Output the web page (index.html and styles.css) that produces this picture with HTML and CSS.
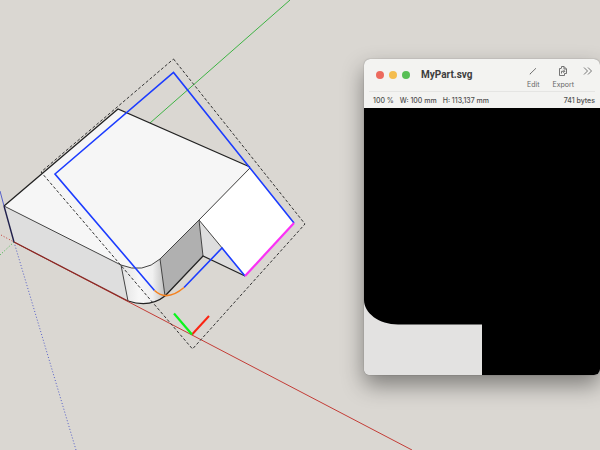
FILE: index.html
```html
<!DOCTYPE html>
<html lang="en">
<head>
<meta charset="utf-8">
<meta name="viewport" content="width=device-width, initial-scale=1">
<title>MyPart.svg</title>
<link rel="stylesheet" href="styles.css">
</head>
<body>
<main class="desktop">
  <svg class="scene" viewBox="0 0 600 450" role="img" aria-label="3D model with selected face">
    <defs>
      <linearGradient id="round" x1="121" y1="0" x2="166" y2="0" gradientUnits="userSpaceOnUse">
        <stop offset="0" stop-color="#e2e2e2"/>
        <stop offset=".4" stop-color="#f7f7f7"/>
        <stop offset=".7" stop-color="#f0f0f0"/>
        <stop offset="1" stop-color="#bcbcbc"/>
      </linearGradient>
    </defs>
    <g class="axes">
      <path class="axis-green" d="M150 123L290 0"/>
      <path class="axis-green dotted" d="M0 255L14 242"/>
      <path class="axis-red dotted" d="M1 235L14 242"/>
      <path class="axis-blue dotted" d="M14 242L76 450"/>
      <path class="axis-blue" d="M0 191L4 206"/>
    </g>
    <g class="solid">
      <path fill="#dedede" d="M4 206L121 265L128 301L14 242Z"/>
      <path fill="url(#round)" d="M121 265Q143 274 160 259L165 296Q150 308 128 301Z"/>
      <path fill="#b0b0b0" d="M199 220L203 256L165 296L160 259Z"/>
      <path fill="#dedede" d="M199 220L203 256L245 276Z"/>
      <path fill="#f6f6f6" d="M4 206L118 109L250 167L199 220L160 259Q143 274 121 265Z"/>
      <path fill="#fff" d="M250 168L294 223L245 276L199 220Z"/>
    </g>
    <g class="edges">
      <path d="M4 206L121 265Q143 274 160 259L199 220L250 168M121 265L128 301M160 259L165 296M199 220L203 256M199 220L223 249"/>
      <path class="bold" d="M4 206L118 109L250 167M165 296L203 256L245 276M128 301Q150 308 165 296"/>
      <path class="navy" d="M4 206L14 242"/>
    </g>
    <path class="axis-red" d="M14 242L412 450"/>
    <path class="base" d="M14 242L128 301"/>
    <path class="bounds" d="M173.500 59L305 224L192.500 349L41 172Z"/>
    <path class="outline" d="M154.500 290.500L55 174L173.500 72.500L294 223M184 287.500L222 248L245 276"/>
    <path class="arc" d="M154.500 290.500Q167 302 184 287.500"/>
    <path class="bottom" d="M245 276L294 223"/>
    <path class="mark-red" d="M192 334.500L209 316"/>
    <path class="mark-green" d="M192 334.500L174 313.500"/>
  </svg>

  <section class="window" aria-label="MyPart.svg">
    <header class="titlebar">
      <div class="lights">
        <button class="light close" aria-label="Close"></button>
        <button class="light minimize" aria-label="Minimize"></button>
        <button class="light expand" aria-label="Zoom"></button>
      </div>
      <h1 class="title">MyPart.svg</h1>
      <div class="tools">
        <button class="tool">
          <svg class="icon" viewBox="0 0 12 12" aria-hidden="true"><path d="M3 9L9 3.200"/><path d="M2.800 9.300L4 8.200"/></svg>
          <span>Edit</span>
        </button>
        <button class="tool">
          <svg class="icon" viewBox="0 0 12 12" aria-hidden="true"><path d="M4.500 3V1.500H7L9.500 4V8.500H7.500M7 1.500V4H9.500M4.500 3.500H2.500V10.500H7.500V8.500M4.500 6.300H7.800M6.300 4.800L7.800 6.300L6.300 7.800M4.500 6.300V8.500"/></svg>
          <span>Export</span>
        </button>
        <button class="tool more" aria-label="More">
          <svg class="icon" viewBox="0 0 12 12" aria-hidden="true"><path d="M2 2.500L5.500 6L2 9.500M6 2.500L9.500 6L6 9.500"/></svg>
        </button>
      </div>
    </header>
    <div class="status">
      <span>100 %</span>
      <span>W: 100 mm</span>
      <span>H: 113,137 mm</span>
      <span class="bytes">741 bytes</span>
    </div>
    <svg class="preview" viewBox="0 0 236 267" role="img" aria-label="Part preview">
      <path d="M0 0H236V267H118V216.500H34C15 216.500 0 205 0 192Z"/>
    </svg>
  </section>
</main>
</body>
</html>
```
FILE: styles.css
```css
* {
  box-sizing: border-box;
}

body {
  margin: 0;
  background: #dad7d2;
  color: #3e3e3e;
  font-family: Inter, "Liberation Sans", sans-serif;
}

.desktop {
  display: grid;
  grid-template-columns: 364fr 236fr;
  align-items: start;
  min-height: 100vh;
  overflow: hidden;
}

.scene {
  grid-area: 1 / 1 / 2 / 3;
  display: block;
  width: 100%;
  fill: none;
}

.axis-green { stroke: #3eb344; }
.axis-red { stroke: #c33c36; }
.axis-blue { stroke: #5660c8; }
.dotted { stroke-dasharray: 1 2; }

.edges {
  stroke: #444;
}

.edges .bold {
  stroke: #222;
  stroke-width: 1.3;
}

.edges .navy {
  stroke: #20204c;
  stroke-width: 1.4;
}

.base {
  stroke: #852b27;
  stroke-width: 1.2;
}

.bounds {
  stroke: #333;
  stroke-dasharray: 3 2;
}

.outline {
  stroke: #1c3cff;
  stroke-width: 1.6;
}

.arc {
  stroke: #f58220;
  stroke-width: 1.6;
}

.bottom {
  stroke: #fa32f5;
  stroke-width: 2.2;
}

.mark-red {
  stroke: #fb2412;
  stroke-width: 2;
}

.mark-green {
  stroke: #0cf51c;
  stroke-width: 2.2;
}

.window {
  grid-area: 1 / 2;
  margin-top: 59px;
  overflow: hidden;
  border-radius: 6px;
  background: #f3f3f1;
  box-shadow: 0 0 1px rgba(0, 0, 0, 0.5), 0 10px 22px rgba(0, 0, 0, 0.42);
}

.titlebar {
  display: flex;
  align-items: center;
  height: 33px;
  margin: 0 5px;
  padding-left: 7px;
  border-bottom: 1px solid #e5e5e3;
}

.lights {
  display: flex;
  gap: 5px;
}

.light {
  width: 8px;
  height: 8px;
  padding: 0;
  border: 0;
  border-radius: 50%;
}

.close { background: #ec6a5e; }
.minimize { background: #f4bd4f; }
.expand { background: #58bf55; }

.title {
  margin: 0 auto 0 11px;
  font-family: Roboto, "Liberation Sans", sans-serif;
  font-size: 10px;
  font-weight: 700;
  line-height: 12px;
}

.tools {
  display: flex;
  align-items: flex-start;
  gap: 13px;
  padding: 4px 1px 0 0;
}

.tool {
  display: flex;
  flex-direction: column;
  align-items: center;
  gap: 4px;
  padding: 0;
  border: 0;
  background: none;
  color: #666;
  font-family: inherit;
  font-size: 7px;
  line-height: 8px;
}

.more {
  margin-left: -5px;
}

.icon {
  width: 12px;
  height: 12px;
  fill: none;
  stroke: currentColor;
  stroke-width: 0.9;
}

.status {
  display: flex;
  align-items: center;
  gap: 6px;
  height: 16px;
  padding: 1px 5px 0 9px;
  color: #505050;
  font-size: 7px;
  font-weight: 500;
  line-height: 9px;
  white-space: nowrap;
}

.bytes {
  margin-left: auto;
}

.preview {
  display: block;
  width: 100%;
  background: #e3e2e1;
}
```
